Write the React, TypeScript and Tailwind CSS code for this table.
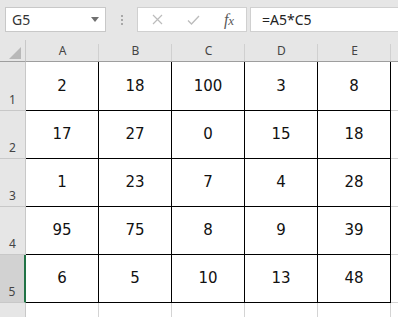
import React from "react";

const data = [
  [2, 18, 100, 3, 8],
  [17, 27, 0, 15, 18],
  [1, 23, 7, 4, 28],
  [95, 75, 8, 9, 39],
  [6, 5, 10, 13, 48],
];
const cols = ["A", "B", "C", "D", "E"];

export default function App() {
  return (
    <div className="w-[398px] h-[317px] overflow-hidden bg-white" style={{ fontFamily: "'Noto Sans', 'Liberation Sans', sans-serif" }}>
      {/* toolbar */}
      <div className="h-[40px] bg-[#e6e6e6] flex items-start pt-[7px] pl-[5px]">
        <div className="w-[101px] h-[25px] bg-white border border-[#c8c8c8] flex items-center pl-[6px] pr-[6px] justify-between">
          <span className="text-[14px] text-[#333]">G5</span>
          <svg width="8" height="5" viewBox="0 0 8 5"><path d="M0 0h8L4 5z" fill="#707070" /></svg>
        </div>
        <div className="w-[31px] h-[25px] flex flex-col items-center justify-center gap-[2px]">
          <span className="w-[2px] h-[2px] bg-[#a8a8a8]" />
          <span className="w-[2px] h-[2px] bg-[#a8a8a8]" />
          <span className="w-[2px] h-[2px] bg-[#a8a8a8]" />
        </div>
        <div className="w-[110px] h-[25px] bg-white border border-[#d0d0d0] flex items-center">
          <div className="w-[37px] flex justify-center pl-[2px]">
            <svg width="11" height="11" viewBox="0 0 11 11"><path d="M1 1L10 10M10 1L1 10" stroke="#bcbcbc" strokeWidth="1.2" /></svg>
          </div>
          <div className="w-[37px] flex justify-center">
            <svg width="13" height="10" viewBox="0 0 13 10"><path d="M1 5.5L4.5 9L12 1" stroke="#bcbcbc" strokeWidth="1.3" fill="none" /></svg>
          </div>
          <div className="w-[34px] flex justify-center">
            <span className="text-[16px] italic text-[#5a5a5a] leading-none" style={{ fontFamily: "'Liberation Serif', serif" }}>f<span className="text-[13px]">x</span></span>
          </div>
        </div>
        <div className="ml-[3px] flex-1 h-[25px] bg-white border border-[#d0d0d0] border-r-0 flex items-center pl-[11px]">
          <span className="text-[14px] text-[#222]">=A5*C5</span>
        </div>
      </div>
      {/* grid */}
      <div className="grid grid-cols-[26px_repeat(5,73px)_1fr] grid-rows-[22px_49px_repeat(4,48px)_1fr] h-[277px]">
        {/* header row */}
        <div className="bg-[#e6e6e6] border-r border-[#c8c8c8] border-b border-b-[#9e9e9e] relative">
          <svg className="absolute right-[4px] bottom-[2px]" width="12" height="12" viewBox="0 0 12 12"><path d="M12 0V12H0z" fill="#b8b8b8" /></svg>
        </div>
        {cols.map((c) => (
          <div key={c} className="bg-[#e6e6e6] border-b border-b-[#9e9e9e] relative flex items-center justify-center text-[12px] text-[#444]">
            <span className="absolute right-0 top-[4px] bottom-0 w-px bg-[#d0d0d0]" />
            {c}
          </div>
        ))}
        <div className="bg-[#e6e6e6] border-b border-b-[#9e9e9e]" />
        {/* data rows */}
        {data.map((row, ri) => {
          const sel = ri === 4;
          return (
            <React.Fragment key={ri}>
              <div className={`${sel ? "bg-[#d2d2d2] border-r-2 border-r-[#217346]" : "bg-[#e6e6e6] border-r border-r-[#c8c8c8]"} border-b border-b-[#c8c8c8] flex items-end justify-center pb-[1px] text-[12px] text-[#444]`}>
                {ri + 1}
              </div>
              {row.map((v, ci) => (
                <div key={ci} className="border-r border-b border-black flex items-center justify-center text-[15px] text-[#111]" style={{ fontFamily: "'DejaVu Sans', Verdana, sans-serif" }}>
                  {v}
                </div>
              ))}
              <div className="border-b border-[#d4d4d4]" />
            </React.Fragment>
          );
        })}
        {/* row 6 */}
        <div className="bg-[#e6e6e6] border-r border-r-[#c8c8c8]" />
        {cols.map((c) => (
          <div key={c} className="border-r border-[#d4d4d4]" />
        ))}
        <div />
      </div>
    </div>
  );
}
